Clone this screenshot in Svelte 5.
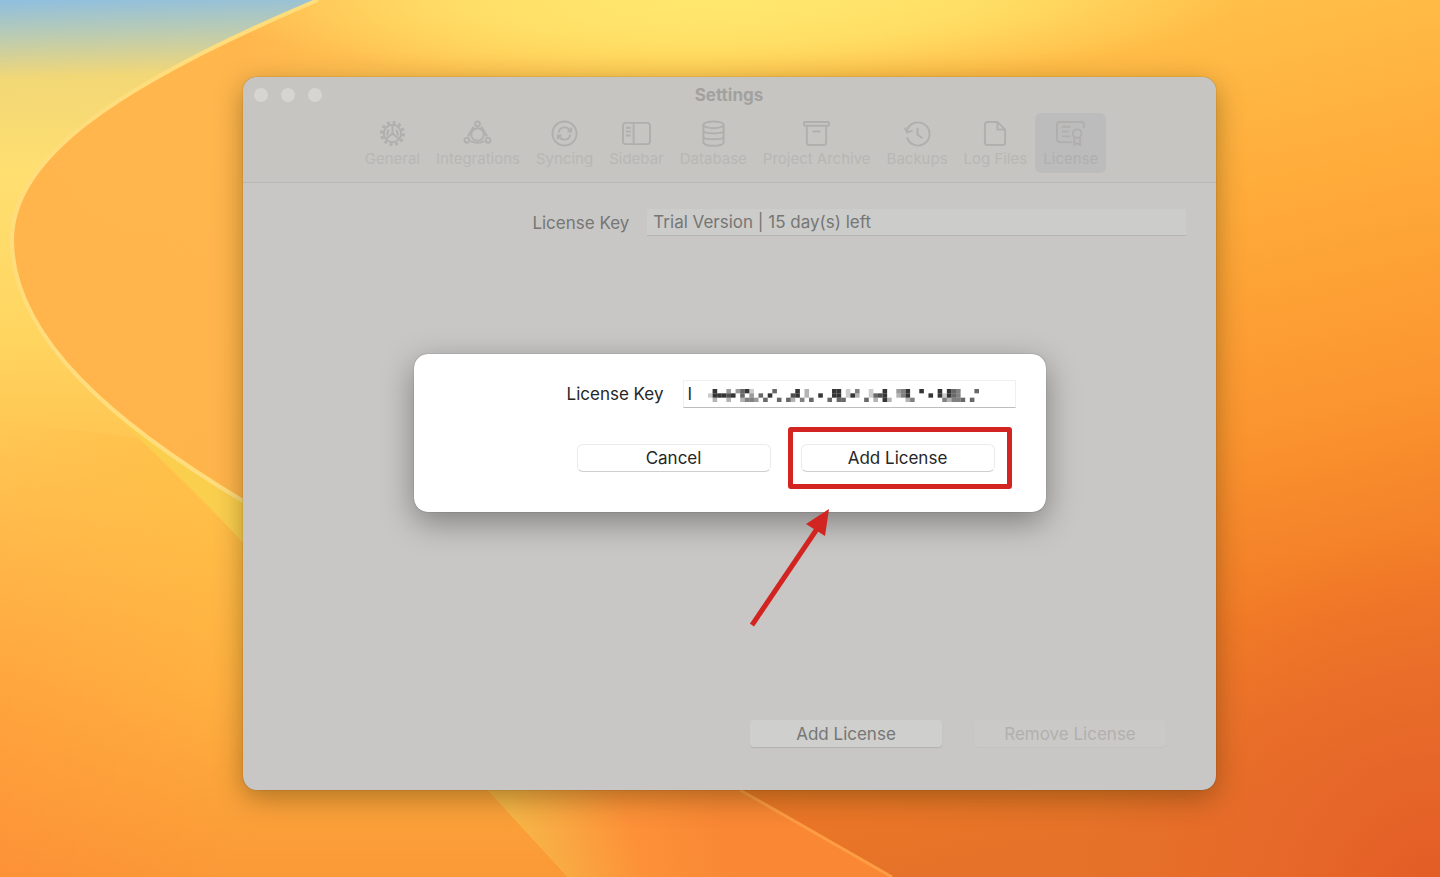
<script lang="ts">
  // Settings window on the License tab, with the "Add License" sheet open
  // and an arrow callout that points at its confirm button.

  interface Tab {
    id: string;
    label: string;
  }

  const tabs: Tab[] = [
    { id: "general", label: "General" },
    { id: "integrations", label: "Integrations" },
    { id: "syncing", label: "Syncing" },
    { id: "sidebar", label: "Sidebar" },
    { id: "database", label: "Database" },
    { id: "archive", label: "Project Archive" },
    { id: "backups", label: "Backups" },
    { id: "logs", label: "Log Files" },
    { id: "license", label: "License" },
  ];

  let active = $state("license");
  let licenseKey = $state("I");

  // Redacted part of the key: one digit per block, 0 is clear and 9 is black.
  const mosaic = [
    "08004046820000600008030000088020500200800458008000808650006",
    "28887806040608000078030080088028300267800358000080828650000",
    "03003003554060060630506000606600006030830003500000053556060",
  ];

  const blocks = mosaic.flatMap((row, y) =>
    [...row].map((d, x) => ({ x, y, alpha: Number(d) / 9 })).filter((b) => b.alpha > 0)
  );
</script>

<main class="desktop">
  <svg class="wallpaper" viewBox="0 0 1440 877" preserveAspectRatio="none" aria-hidden="true">
    <defs>
      <linearGradient id="left" x1="0" y1="0" x2="0.05" y2="1">
        <stop offset="0" stop-color="#8fbfe0" />
        <stop offset="0.04" stop-color="#b9cbb4" />
        <stop offset="0.09" stop-color="#f2d776" />
        <stop offset="0.2" stop-color="#ffdf70" />
        <stop offset="0.38" stop-color="#ffd560" />
        <stop offset="0.55" stop-color="#ffc04e" />
        <stop offset="0.78" stop-color="#ffa63f" />
        <stop offset="1" stop-color="#fd9236" />
      </linearGradient>
      <linearGradient id="sweep" gradientUnits="userSpaceOnUse" x1="700" y1="0" x2="900" y2="877">
        <stop offset="0" stop-color="#ffd95c" />
        <stop offset="0.12" stop-color="#ffc04a" />
        <stop offset="0.35" stop-color="#ffab3a" />
        <stop offset="0.6" stop-color="#fb952f" />
        <stop offset="0.8" stop-color="#f27c27" />
        <stop offset="1" stop-color="#e57228" />
      </linearGradient>
      <linearGradient id="bay" gradientUnits="userSpaceOnUse" x1="0" y1="0" x2="700" y2="0">
        <stop offset="0" stop-color="#ffb54c" />
        <stop offset="0.35" stop-color="#ffb54c" stop-opacity="0.95" />
        <stop offset="1" stop-color="#ffb54c" stop-opacity="0" />
      </linearGradient>
      <radialGradient id="glow" gradientUnits="userSpaceOnUse" cx="0" cy="0" r="1" gradientTransform="translate(720 0) scale(520 85)">
        <stop offset="0" stop-color="#ffe76e" />
        <stop offset="0.5" stop-color="#ffe76e" stop-opacity="0.7" />
        <stop offset="1" stop-color="#ffe76e" stop-opacity="0" />
      </radialGradient>
      <radialGradient id="ember" gradientUnits="userSpaceOnUse" cx="1440" cy="900" r="360">
        <stop offset="0" stop-color="#e25a25" />
        <stop offset="0.5" stop-color="#e8632a" stop-opacity="0.6" />
        <stop offset="1" stop-color="#e8632a" stop-opacity="0" />
      </radialGradient>
      <linearGradient id="floor" gradientUnits="userSpaceOnUse" x1="0" y1="500" x2="0" y2="877">
        <stop offset="0" stop-color="#ffbf48" />
        <stop offset="0.5" stop-color="#ffb040" />
        <stop offset="1" stop-color="#fa9937" />
      </linearGradient>
      <linearGradient id="petal" gradientUnits="userSpaceOnUse" x1="520" y1="850" x2="720" y2="800">
        <stop offset="0" stop-color="#f7b648" />
        <stop offset="0.55" stop-color="#fd9138" />
        <stop offset="1" stop-color="#f98734" />
      </linearGradient>
      <linearGradient id="fade" gradientUnits="userSpaceOnUse" x1="0" y1="0" x2="330" y2="0">
        <stop offset="0" stop-color="#fff" stop-opacity="0" />
        <stop offset="0.7" stop-color="#fff" />
      </linearGradient>
      <mask id="floor-mask">
        <rect width="1440" height="877" fill="url(#fade)" />
      </mask>
    </defs>
    <rect width="1440" height="877" fill="url(#left)" />
    <path d="M0 420L150 440L243 545L490 790L568 877L0 877Z" fill="url(#floor)" mask="url(#floor-mask)" />
    <path d="M13 240C13 325 90 400 243 499L500 640L740 790L660 877L568 877L488 790L243 543C200 495 150 450 100 400Z" fill="#fbcf4e" />
    <path d="M340 640L740 790L892 877L568 877L488 790Z" fill="url(#petal)" />
    <path d="M318 0C110 88 12 160 12 240C12 340 120 427 243 501L600 700L740 790L892 877L1440 877L1440 0Z" fill="url(#sweep)" />
    <path d="M318 0C110 88 12 160 12 240C12 340 120 427 243 501L600 700L740 790L892 877L1440 877L1440 0Z" fill="url(#bay)" />
    <path d="M318 0C110 88 12 160 12 240L1440 240L1440 0Z" fill="url(#glow)" />
    <rect x="900" y="450" width="540" height="427" fill="url(#ember)" />
    <path d="M318 0C110 88 12 160 12 240C12 340 120 427 243 501" fill="none" stroke="#ffdd7d" stroke-width="4" />
    <path d="M740 790L892 877" fill="none" stroke="#ff9d45" stroke-width="3" />
  </svg>

  <section class="window" aria-label="Settings">
    <header class="toolbar">
      <div class="titlebar">
        <div class="lights">
          <button type="button" class="light" aria-label="Close"></button>
          <button type="button" class="light" aria-label="Minimize"></button>
          <button type="button" class="light" aria-label="Zoom"></button>
        </div>
        <h1 class="title">Settings</h1>
      </div>
      <nav class="tabs">
        {#each tabs as tab (tab.id)}
          <button
            type="button"
            class="tab"
            class:tab-active={active === tab.id}
            onclick={() => (active = tab.id)}
          >
            <svg class="tab-icon" viewBox="0 0 30 28" aria-hidden="true">
              {#if tab.id === "general"}
                <circle cx="15" cy="14" r="9" />
                <circle cx="15" cy="14" r="11.5" stroke-width="3" stroke-dasharray="3 3" />
                <path d="M15 14V6M15 14l-6 5M15 14l6 5M11 10l-2 6M19 10l2 6" />
              {:else if tab.id === "integrations"}
                <circle cx="15" cy="15" r="6.5" />
                <circle cx="15" cy="4" r="2.5" />
                <circle cx="4" cy="21" r="2.5" />
                <circle cx="26" cy="21" r="2.5" />
                <path d="M11 7L5 17M19 7l6 10M8 22c4 2 10 2 14 0" />
              {:else if tab.id === "syncing"}
                <circle cx="15" cy="14" r="12.5" />
                <path d="M9 13c1-7 10-7 12-1M21 15c-1 7-10 7-12 1M18 12h4V8M12 16H8v4" />
              {:else if tab.id === "sidebar"}
                <rect x="1" y="3" width="28" height="22" rx="3" />
                <path d="M12 3v22M4 8h5M4 12h5M4 16h5" />
              {:else if tab.id === "database"}
                <ellipse cx="15" cy="5" rx="10.5" ry="3.5" />
                <path d="M4.500 5v18c0 5 21 5 21 0V5M4.500 11c0 4 21 4 21 0M4.500 17c0 4 21 4 21 0" />
              {:else if tab.id === "archive"}
                <rect x="2" y="2" width="26" height="4" rx="1" />
                <path d="M5 6v17q0 3 3 3h14q3 0 3-3V6M11 12h8" />
              {:else if tab.id === "backups"}
                <path d="M4 11a12 12 0 1 1 0 7M2 8l2 5 6-2M15 8v7l5 4" />
              {:else if tab.id === "logs"}
                <path d="M17 2H7q-3 0-3 3v18q0 3 3 3h15q3 0 3-3V10ZM17 2v8h8" />
              {:else}
                <path d="M17 23H4q-3 0-3-3V5q0-3 3-3h22q3 0 3 3v3M6 7h9M6 12h7M6 17h9" />
                <circle cx="22" cy="14" r="4.500" />
                <path d="M19 18v8l3-2 3 2v-8" />
              {/if}
            </svg>
            <span>{tab.label}</span>
          </button>
        {/each}
      </nav>
    </header>

    <div class="pane">
      <div class="field">
        <label for="current-key">License Key</label>
        <input id="current-key" class="current" type="text" value="Trial Version | 15 day(s) left" readonly />
      </div>
      <div class="pane-actions">
        <button type="button" class="pane-button">Add License</button>
        <button type="button" class="pane-button" disabled>Remove License</button>
      </div>
    </div>

    <div class="sheet" role="dialog" aria-modal="true" aria-label="Add License">
      <div class="sheet-field">
        <label for="new-key">License Key</label>
        <div class="key-box">
          <input id="new-key" class="key" type="text" bind:value={licenseKey} spellcheck="false" />
          <svg class="mosaic" viewBox="0 0 59 3" preserveAspectRatio="none" aria-hidden="true">
            {#each blocks as b}
              <rect x={b.x} y={b.y} width="1" height="1" fill-opacity={b.alpha} />
            {/each}
          </svg>
        </div>
      </div>
      <div class="sheet-actions">
        <button type="button" class="sheet-button">Cancel</button>
        <div class="callout">
          <button type="button" class="sheet-button">Add License</button>
          <svg class="arrow" viewBox="0 0 80 118" aria-hidden="true">
            <path d="M2 116L69 17" />
            <polygon points="79,0 56,15 75,27" />
          </svg>
        </div>
      </div>
    </div>
  </section>
</main>

<style>
  :global(body) {
    margin: 0;
  }
  .desktop {
    position: relative;
    box-sizing: border-box;
    min-height: 100vh;
    padding: 77px 224px 87px 243px;
    display: flex;
    overflow: hidden;
    font-family: Inter, "Liberation Sans", sans-serif;
    font-size: 17px;
    line-height: 24px;
  }
  .wallpaper {
    position: absolute;
    inset: 0;
    width: 100%;
    height: 100%;
  }
  button,
  input {
    margin: 0;
    padding: 0;
    border: 0;
    background: none;
    font: inherit;
    color: inherit;
    box-sizing: border-box;
  }
  .window {
    position: relative;
    flex: 1;
    min-width: 0;
    display: flex;
    flex-direction: column;
    border-radius: 14px;
    background: #c8c7c5;
    color: #767674;
    box-shadow:
      0 0 1px rgba(0, 0, 0, 0.5),
      0 8px 28px rgba(70, 50, 0, 0.42);
  }
  .toolbar {
    height: 106px;
    box-sizing: border-box;
    border-bottom: 1px solid #b8b7b5;
    border-radius: 14px 14px 0 0;
    background: #c6c5c1;
  }
  .titlebar {
    display: grid;
    grid-template-columns: 1fr auto 1fr;
    align-items: center;
    height: 36px;
    padding: 0 12px 0 11px;
  }
  .lights {
    display: flex;
    gap: 13px;
  }
  .light {
    width: 14px;
    height: 14px;
    border-radius: 50%;
    background: #d6d5d2;
  }
  .title {
    margin: 0;
    font-size: 17px;
    font-weight: 700;
    color: #a2a19f;
  }
  .tabs {
    display: flex;
    justify-content: center;
    padding: 0 0 0 4px;
  }
  .tab {
    height: 60px;
    padding: 7px 8px 0;
    display: flex;
    flex-direction: column;
    align-items: center;
    gap: 2px;
    border-radius: 6px;
    font-size: 15px;
    line-height: 20px;
    color: #b8b7b5;
    white-space: nowrap;
  }
  .tab-active {
    background: #bdbcbc;
    color: #b0afaf;
  }
  .tab-icon {
    width: 29px;
    height: 27px;
    fill: none;
    stroke: #b0afae;
    stroke-width: 2;
  }
  .pane {
    flex: 1;
    display: flex;
    flex-direction: column;
    justify-content: space-between;
    padding: 26px 30px 43px;
  }
  .field {
    display: flex;
    align-items: center;
    justify-content: flex-end;
    gap: 18px;
  }
  .current {
    width: 59%;
    height: 27px;
    padding: 0 6px;
    background: #cccccb;
    border-bottom: 1px solid #b5b5b4;
  }
  .pane-actions {
    display: flex;
    justify-content: flex-end;
    gap: 32px;
    padding-right: 20px;
  }
  .pane-button {
    width: 192px;
    height: 27px;
    border-radius: 4px;
    background: #cfcfce;
    box-shadow: 0 1px 1px #b2b2b1;
  }
  .pane-button:disabled {
    background: #cac9c8;
    box-shadow: 0 1px 1px #c2c1c0;
    color: #b1b0af;
  }
  .sheet {
    position: absolute;
    top: 277px;
    left: 50%;
    transform: translateX(-50%);
    width: 632px;
    height: 158px;
    max-width: 100%;
    box-sizing: border-box;
    padding: 26px 30px 22px;
    display: flex;
    flex-direction: column;
    gap: 19px;
    border-radius: 14px;
    background: #fff;
    color: #262626;
    box-shadow:
      0 0 1px rgba(0, 0, 0, 0.6),
      0 10px 32px rgba(0, 0, 0, 0.36);
  }
  .sheet-field {
    display: flex;
    align-items: center;
    justify-content: flex-end;
    gap: 19px;
  }
  .key-box {
    position: relative;
    width: 333px;
  }
  .key {
    display: block;
    width: 100%;
    height: 28px;
    padding: 0 4px;
    border: 1px solid #f0f0f0;
    border-bottom-color: #bdbdbd;
    outline: none;
  }
  .mosaic {
    position: absolute;
    left: 25px;
    top: 9px;
    width: 271px;
    height: 13px;
    fill: #1c1c1c;
  }
  .sheet-actions {
    display: flex;
    align-items: center;
    justify-content: flex-end;
    gap: 17px;
    padding-right: 4px;
  }
  .sheet-button {
    width: 194px;
    height: 28px;
    border: 1px solid #ebebeb;
    border-bottom-color: #cfcfcf;
    border-radius: 6px;
    background: #fff;
    flex: none;
  }
  .callout {
    position: relative;
    box-sizing: border-box;
    height: 62px;
    display: flex;
    align-items: center;
    padding: 0 12px 0 8px;
    border: 5px solid #d22421;
    border-radius: 3px;
  }
  .arrow {
    position: absolute;
    top: 77px;
    left: -43px;
    width: 80px;
    height: 118px;
    fill: #d22421;
    stroke: none;
  }
  .arrow path {
    stroke: #d22421;
    stroke-width: 5;
  }
</style>
